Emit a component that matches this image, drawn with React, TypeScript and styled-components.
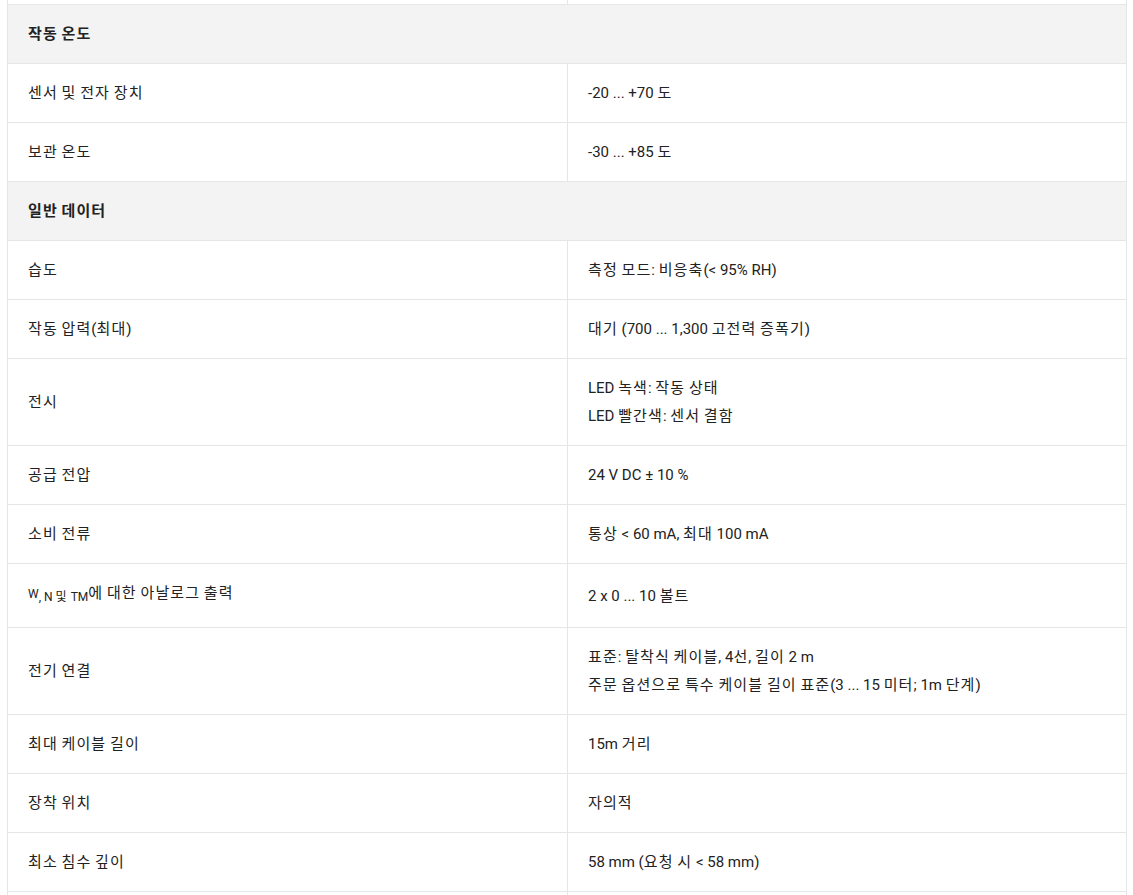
import React from "react";
import styled, { createGlobalStyle } from "styled-components";

const Global = createGlobalStyle`
  html, body {
    margin: 0;
    padding: 0;
    background: #ffffff;
  }
  body {
    font-family: Roboto, "Noto Sans CJK KR", "Noto Sans", sans-serif;
    color: #222222;
    font-size: 15px;
    -webkit-font-smoothing: antialiased;
  }
  * { box-sizing: border-box; }
`;

const BORDER = "#e6e6e6";

const Page = styled.div`
  height: 895px;
  overflow: hidden;
  padding-left: 7px;
`;

const Table = styled.div`
  width: 1120px;
  border-left: 1px solid ${BORDER};
  border-right: 1px solid ${BORDER};
`;

const Row = styled.div<{ $sliver?: boolean }>`
  display: grid;
  grid-template-columns: 560px 1fr;
  border-bottom: 1px solid ${BORDER};
  height: ${(p) => (p.$sliver ? "5px" : "auto")};
`;

const SectionRow = styled.div`
  background: #f3f3f3;
  border-bottom: 1px solid ${BORDER};
  padding: 15px 20px;
  line-height: 28px;
  font-weight: 700;
  font-size: 15px;
  color: #222222;
`;

const Cell = styled.div<{ $label?: boolean }>`
  padding: 15px 20px;
  line-height: 28px;
  font-size: 15px;
  color: #222222;
  border-right: ${(p) => (p.$label ? `1px solid ${BORDER}` : "none")};
  display: flex;
  flex-direction: column;
  justify-content: center;
`;

const EmptyCell = styled.div<{ $label?: boolean }>`
  border-right: ${(p) => (p.$label ? `1px solid ${BORDER}` : "none")};
`;

const Line = styled.div<{ $extra?: boolean }>`
  line-height: 28px;
  padding-bottom: ${(p) => (p.$extra ? "1px" : "0")};
`;

const Hangul = styled.span`
  letter-spacing: 1.1px;
`;

const SmallW = styled.span`
  font-size: 12px;
  vertical-align: 0;
`;

const SubText = styled.span`
  font-size: 12px;
  vertical-align: -3px;
`;

function Ko({ text }: { text: string }) {
  const parts = text.split(/([\uAC00-\uD7A3\u3131-\u318E]+)/);
  return (
    <>
      {parts.map((p, i) =>
        /[\uAC00-\uD7A3\u3131-\u318E]/.test(p) ? (
          <Hangul key={i}>{p}</Hangul>
        ) : (
          <React.Fragment key={i}>{p}</React.Fragment>
        )
      )}
    </>
  );
}

type Item =
  | { kind: "section"; title: string }
  | { kind: "row"; label: React.ReactNode; value: string[]; extra?: boolean };

const items: Item[] = [
  { kind: "section", title: "작동 온도" },
  { kind: "row", label: "센서 및 전자 장치", value: ["-20 ... +70 도"] },
  { kind: "row", label: "보관 온도", value: ["-30 ... +85 도"] },
  { kind: "section", title: "일반 데이터" },
  { kind: "row", label: "습도", value: ["측정 모드: 비응축(< 95% RH)"] },
  { kind: "row", label: "작동 압력(최대)", value: ["대기 (700 ... 1,300 고전력 증폭기)"] },
  { kind: "row", label: "전시", value: ["LED 녹색: 작동 상태", "LED 빨간색: 센서 결함"] },
  { kind: "row", label: "공급 전압", value: ["24 V DC ± 10 %"] },
  { kind: "row", label: "소비 전류", value: ["통상 < 60 mA, 최대 100 mA"] },
  {
    kind: "row",
    extra: true,
    label: (
      <>
        <SmallW>W</SmallW>
        <SubText>
          , N <Ko text="및" /> TM
        </SubText>
        <Ko text="에 대한 아날로그 출력" />
      </>
    ),
    value: ["2 x 0 ... 10 볼트"],
  },
  {
    kind: "row",
    label: "전기 연결",
    value: ["표준: 탈착식 케이블, 4선, 길이 2 m", "주문 옵션으로 특수 케이블 길이 표준(3 ... 15 미터; 1m 단계)"],
  },
  { kind: "row", label: "최대 케이블 길이", value: ["15m 거리"] },
  { kind: "row", label: "장착 위치", value: ["자의적"] },
  { kind: "row", label: "최소 침수 깊이", value: ["58 mm (요청 시 < 58 mm)"] },
];

export default function App() {
  return (
    <>
      <Global />
      <Page>
        <Table>
          <Row $sliver>
            <EmptyCell $label />
            <EmptyCell />
          </Row>
          {items.map((it, i) =>
            it.kind === "section" ? (
              <SectionRow key={i}>
                <Ko text={it.title} />
              </SectionRow>
            ) : (
              <Row key={i}>
                <Cell $label>
                  <Line $extra={it.extra}>
                    {typeof it.label === "string" ? <Ko text={it.label} /> : it.label}
                  </Line>
                </Cell>
                <Cell>
                  {it.value.map((v, j) => (
                    <Line key={j}>
                      <Ko text={v} />
                    </Line>
                  ))}
                </Cell>
              </Row>
            )
          )}
          <Row $sliver>
            <EmptyCell $label />
            <EmptyCell />
          </Row>
        </Table>
      </Page>
    </>
  );
}
